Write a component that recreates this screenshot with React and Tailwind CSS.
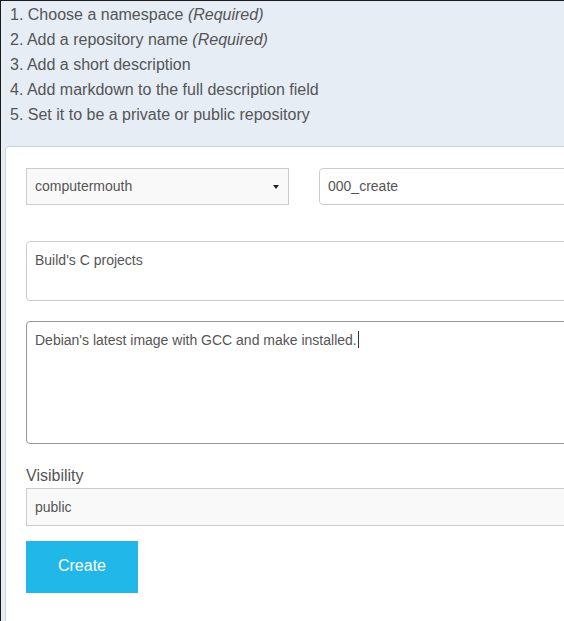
import React from "react";

const steps = [
  { text: "Choose a namespace", req: true },
  { text: "Add a repository name", req: true },
  { text: "Add a short description" },
  { text: "Add markdown to the full description field" },
  { text: "Set it to be a private or public repository" },
];

function Caret() {
  return <span className="inline-block w-px h-[17px] bg-[#333] align-[-3px] ml-px" />;
}

export default function App() {
  return (
    <div
      className="w-[564px] h-[621px] overflow-hidden border-t border-l border-[#1a1a1a] bg-[#e6edf5] text-[#555]"
      style={{ fontFamily: '"Liberation Sans", Arial, sans-serif' }}
    >
      <ol className="pl-[9px] pt-[1px] text-[16px] leading-[25px]">
        {steps.map((s, i) => (
          <li key={i}>
            {i + 1}. {s.text}
            {s.req && <i> (Required)</i>}
          </li>
        ))}
      </ol>

      <div className="mt-[19px] ml-[4px] w-[598px] h-[500px] bg-white border border-[#c9d3df] rounded-tl-[4px] px-[20px] pt-[21px]">
        <div className="flex gap-[30px]">
          <div className="w-[263px] h-[37px] flex items-center justify-between bg-[#f9f9f9] border border-[#ccc] pl-[8px] pr-[9px] text-[14px]">
            <span>computermouth</span>
            <span className="w-0 h-0 border-l-[3px] border-r-[3px] border-t-[4px] border-l-transparent border-r-transparent border-t-[#222]" />
          </div>
          <div className="w-[263px] h-[37px] flex items-center border border-[#ccc] rounded-[4px] pl-[8px] text-[14px]">
            000_create
          </div>
        </div>

        <div className="mt-[36px] h-[60px] border border-[#ccc] rounded-[4px] px-[8px] pt-[9px] text-[14px] leading-[18px]">
          Build's C projects
        </div>

        <div className="mt-[20px] h-[123px] border border-[#999] rounded-[4px] px-[8px] pt-[9px] text-[14px] leading-[18px]">
          Debian's latest image with GCC and make installed.
          <Caret />
        </div>

        <label className="block mt-[22px] text-[16px] leading-[20px]">Visibility</label>
        <div className="mt-[2px] h-[38px] flex items-center bg-[#f9f9f9] border border-[#ccc] pl-[8px] text-[14px]">
          public
        </div>

        <button className="mt-[15px] w-[112px] h-[52px] pb-[2px] bg-[#21b8e9] text-white text-[16px]">
          Create
        </button>
      </div>
    </div>
  );
}
